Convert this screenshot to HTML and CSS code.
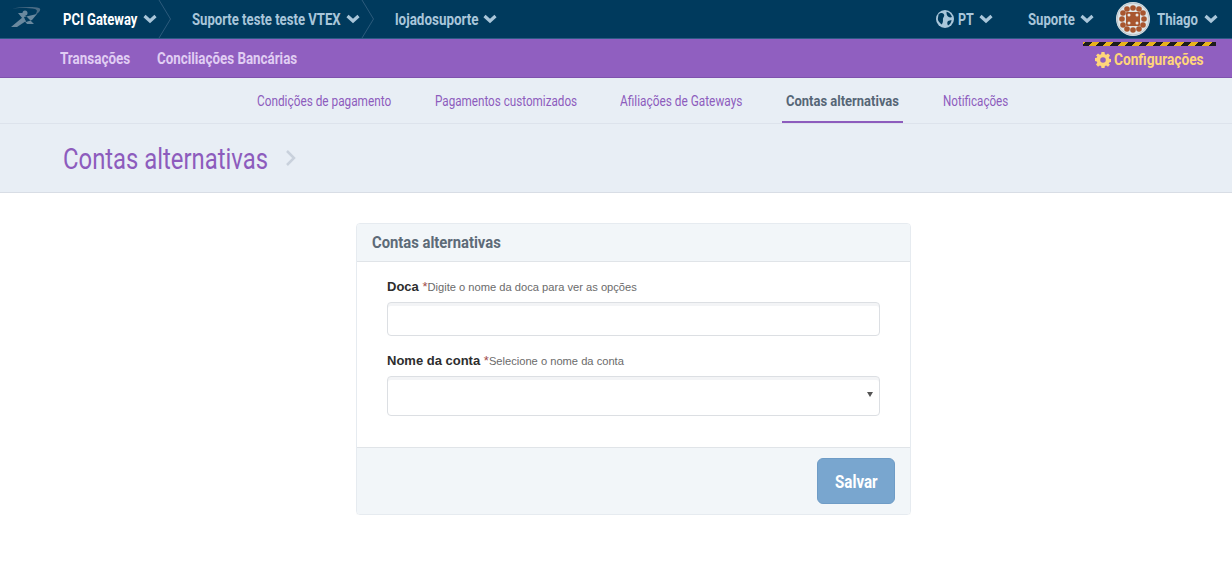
FILE: index.html
```html
<!DOCTYPE html>
<html lang="en">
<head>
    <meta charset="UTF-8">
    <title>Contas alternativas</title>
    <link rel="stylesheet" href="styles.css">
</head>
<body>

<div class="topbar">
    <svg class="logo" width="44" height="26" viewBox="0 0 44 26">
        <path d="M0 3 C10 1 24 0 30 2 C33 3 30 7 26 9 C28 6 29 4 26 3 C18 1.500 8 2 0 3Z" fill="#4a6c85"/>
        <circle cx="16" cy="7" r="2.500" fill="#6a899f"/>
        <path d="M2 21 L14 11 L17 15 L8 21Z M28 8 L15 11 L17 16 L23 14Z M9 7 L14 7 L25 18 L18 18Z" fill="#6a899f"/>
    </svg>
    <div class="crumb crumb-active"><span class="cond w-pci">PCI Gateway</span> <svg class="chev" viewBox="0 0 14 10"><path d="M1.500 2 L7 7 L12.500 2" /></svg></div>
    <svg class="sep" width="14" height="38" viewBox="0 0 14 38"><path d="M1 0 L12.500 19 L1 38" /></svg>
    <div class="crumb"><span class="cond w-store">Suporte teste teste VTEX</span> <svg class="chev" viewBox="0 0 14 10"><path d="M1.500 2 L7 7 L12.500 2" /></svg></div>
    <svg class="sep" width="14" height="38" viewBox="0 0 14 38"><path d="M1 0 L12.500 19 L1 38" /></svg>
    <div class="crumb"><span class="cond w-loja">lojadosuporte</span> <svg class="chev" viewBox="0 0 14 10"><path d="M1.500 2 L7 7 L12.500 2" /></svg></div>

    <div class="topbar-right">
        <div class="crumb lang">
            <svg class="globe" width="18" height="18" viewBox="0 0 18 18">
                <circle cx="9" cy="9" r="9" fill="#a9c6da"/>
                <path d="M2.500 4.500 C4 2.500 7 2.500 8 4.500 C9 6.500 6.500 7.500 7 10 C7 12 6.500 14 5.500 14.500 C4 12.500 2 11.500 1.800 9Z M10.500 1.800 C12.500 2 15 4 16 7 C14 8 12.500 7 11.500 6 C10.500 5 10.500 3 10.500 1.800Z M12 11 L15.500 10 C15.500 12 14 14.500 12 15.500 C11 14 11 12 12 11Z" fill="#003a5d"/>
            </svg>
            <span class="cond w-pt">PT</span> <svg class="chev" viewBox="0 0 14 10"><path d="M1.500 2 L7 7 L12.500 2" /></svg>
        </div>
        <div class="crumb"><span class="cond w-sup">Suporte</span> <svg class="chev" viewBox="0 0 14 10"><path d="M1.500 2 L7 7 L12.500 2" /></svg></div>
        <div class="crumb user">
            <svg class="avatar" width="34" height="34" viewBox="0 0 34 34">
                <circle cx="17" cy="17" r="17" fill="#dfe5e6"/>
                <circle cx="17" cy="17" r="16" fill="none" stroke="#b9c6cd"/>
                <g fill="#a8562f">
                    <circle cx="11" cy="7" r="2.800"/><circle cx="17" cy="6" r="2.800"/><circle cx="23" cy="7" r="2.800"/>
                    <circle cx="7" cy="11" r="2.800"/><circle cx="27" cy="11" r="2.800"/>
                    <circle cx="6" cy="17" r="2.800"/><circle cx="28" cy="17" r="2.800"/>
                    <circle cx="7" cy="23" r="2.800"/><circle cx="27" cy="23" r="2.800"/>
                    <circle cx="11" cy="27" r="2.800"/><circle cx="17" cy="28" r="2.800"/><circle cx="23" cy="27" r="2.800"/>
                    <rect x="10" y="10" width="14" height="14" rx="1"/>
                </g>
                <g fill="#e8e4e0">
                    <circle cx="13" cy="13" r="1.500"/><circle cx="21" cy="13" r="1.500"/>
                    <circle cx="13" cy="21" r="1.500"/><circle cx="21" cy="21" r="1.500"/>
                </g>
            </svg>
            <span class="cond w-user">Thiago</span> <svg class="chev" viewBox="0 0 14 10"><path d="M1.500 2 L7 7 L12.500 2" /></svg>
        </div>
    </div>
</div>

<div class="mainnav">
    <a class="mainnav-link cond w-trans">Transações</a>
    <a class="mainnav-link cond w-conc">Conciliações Bancárias</a>
    <div class="settings">
        <div class="hazard"></div>
        <div class="settings-label">
            <svg width="16" height="16" viewBox="0 0 16 16">
                <path fill="#ffd67a" fill-rule="evenodd" d="M6.500 0h3l.4 2.200 1.300.6L13 1.500 15 3.600l-1.300 1.800.5 1.300 1.800.4v3l-1.800.4-.5 1.300L15 12.600 13 14.700l-1.800-1.300-1.300.5-.4 2.100h-3l-.4-2.100-1.300-.5L3 14.700 1 12.600l1.300-1.800-.5-1.300L0 9.100v-3l1.800-.4.5-1.300L1 3.600 3 1.500l1.800 1.300 1.300-.6zM8 5.200a2.800 2.800 0 1 0 0 5.600 2.800 2.800 0 0 0 0-5.600z"/>
            </svg>
            <span class="cond w-conf">Configurações</span>
        </div>
    </div>
</div>

<div class="subnav">
    <a class="subnav-link"><span class="cond w-cond">Condições de pagamento</span></a>
    <a class="subnav-link"><span class="cond w-pag">Pagamentos customizados</span></a>
    <a class="subnav-link"><span class="cond w-afil">Afiliações de Gateways</span></a>
    <a class="subnav-link subnav-active"><span class="cond w-contas">Contas alternativas</span></a>
    <a class="subnav-link"><span class="cond w-notif">Notificações</span></a>
</div>

<div class="pagehead">
    <h1 class="cond w-title">Contas alternativas</h1>
    <svg width="14" height="18" viewBox="0 0 14 18"><path d="M3 2 L10 9 L3 16" /></svg>
</div>

<div class="panel">
    <div class="panel-head"><span class="cond w-head">Contas alternativas</span></div>
    <div class="panel-body">
        <label class="field-label" for="doca"><b>Doca</b> <i>*</i><span>Digite o nome da doca para ver as opções</span></label>
        <input class="field field-input" id="doca" type="text">
        <label class="field-label" for="conta"><b>Nome da conta</b> <i>*</i><span>Selecione o nome da conta</span></label>
        <div class="field field-select" id="conta"></div>
    </div>
    <div class="panel-foot">
        <button class="save"><span class="cond w-save">Salvar</span></button>
    </div>
</div>

</body>
</html>
```

FILE: styles.css
```css
body {
    margin: 0;
    font-family: "Roboto", "Liberation Sans", sans-serif;
    background-color: #fff;
}

/* the original face is condensed, none is installed: squeeze Roboto to the same widths */
.cond {
    display: inline-block;
    white-space: nowrap;
    transform-origin: left center;
    transform: scaleX(var(--squeeze));
}
.w-pci { width: 75px; --squeeze: 0.815; }
.w-store { width: 149px; --squeeze: 0.82; }
.w-loja { width: 83px; --squeeze: 0.84; }
.w-pt { width: 15px; --squeeze: 0.78; }
.w-sup { width: 47px; --squeeze: 0.82; }
.w-user { width: 40px; --squeeze: 0.82; }
.w-trans { width: 70px; --squeeze: 0.814; }
.w-conc { width: 140px; --squeeze: 0.81; }
.w-conf { width: 90px; --squeeze: 0.83; }
.w-cond { width: 134px; --squeeze: 0.787; }
.w-pag { width: 141px; --squeeze: 0.778; }
.w-afil { width: 122px; --squeeze: 0.79; }
.w-contas { width: 113px; --squeeze: 0.865; }
.w-notif { width: 65px; --squeeze: 0.775; }
.w-title { width: 205px; --squeeze: 0.795; }
.w-head { width: 128px; --squeeze: 0.87; }
.w-save { width: 42px; --squeeze: 0.84; }

.topbar {
    display: flex;
    align-items: center;
    height: 38px;
    background-color: #003a5d;
    border-bottom: 1px solid #2c5b86;
    padding-left: 9px;
    color: #a9c6da;
    font-size: 16px;
    font-weight: 700;
}
.logo {
    margin-right: 10px;
}
.crumb {
    display: flex;
    align-items: center;
    gap: 5px;
    white-space: nowrap;
}
.crumb-active {
    color: #fff;
}
.chev {
    flex: none;
    width: 14px;
    height: 10px;
    fill: none;
    stroke: #a9c6da;
    stroke-width: 3.200;
}
.sep {
    flex: none;
    margin: 0 20px 0 1px;
    fill: none;
    stroke: #2c5b7c;
}
.topbar-right {
    display: flex;
    align-items: center;
    margin-left: auto;
    padding-right: 14px;
}
.lang {
    margin-right: 35px;
    gap: 4px;
}
.lang .chev {
    margin-left: 2px;
}
.user {
    margin-left: 22px;
    gap: 7px;
}
.mainnav {
    display: flex;
    align-items: center;
    height: 38px;
    padding-left: 60px;
    background-color: #905fc0;
    border-bottom: 1px solid #7f52ad;
    gap: 27px;
}
.mainnav-link {
    color: #e0cdf3;
    font-size: 16.500px;
    font-weight: 700;
}
.settings {
    margin-left: auto;
    margin-right: 16px;
    width: 133px;
    align-self: flex-start;
    padding-top: 3px;
}
.hazard {
    height: 4px;
    background: repeating-linear-gradient(-45deg, #1d1d1d 0 5px, #e8b21c 5px 10px);
}
.settings-label {
    display: flex;
    align-items: center;
    gap: 3px;
    height: 25px;
    margin-top: 1px;
    margin-left: 12px;
    color: #ffd67a;
    font-size: 16.500px;
    font-weight: 700;
}
.settings-label svg {
    flex: none;
}
.subnav {
    display: flex;
    justify-content: center;
    height: 45px;
    gap: 36px;
    padding-left: 32px;
    background-color: #e8eef5;
    border-bottom: 1px solid #dde3ec;
}
.subnav-link {
    display: flex;
    align-items: center;
    box-sizing: border-box;
    padding: 0 4px;
    color: #8d5cbd;
    font-size: 15px;
}
.subnav-active {
    color: #566676;
    font-weight: 700;
    border-bottom: 2px solid #8d5cbd;
    padding-top: 2px;
}
.pagehead {
    display: flex;
    align-items: center;
    gap: 16px;
    height: 68px;
    padding-left: 63px;
    background-color: #e8eef5;
    border-bottom: 1px solid #d8dde5;
}
.pagehead h1 {
    margin: 0;
    color: #8d5cbd;
    font-size: 30px;
    font-weight: 400;
}
.pagehead svg {
    fill: none;
    stroke: #c9d1dc;
    stroke-width: 2.500;
}
.panel {
    width: 553px;
    margin: 30px 0 0 356px;
    border: 1px solid #e6ebf0;
    border-radius: 4px;
    overflow: hidden;
    box-shadow: 0 1px 1px rgba(0,0,0,0.03);
}
.panel-head {
    height: 37px;
    line-height: 37px;
    padding-left: 15px;
    background-color: #f2f6f9;
    border-bottom: 1px solid #e0e4e8;
    color: #5d6b78;
    font-size: 17px;
    font-weight: 700;
}
.panel-body {
    padding: 15px 30px 31px;
}
.field-label {
    display: block;
    height: 25px;
    font-family: "Liberation Sans", Arial, sans-serif;
    line-height: 20px;
    font-size: 13px;
    color: #2d2d2d;
}
.field-label i {
    color: #a04a4a;
    font-style: normal;
}
.field-label span {
    color: #6b6b6b;
    font-size: 11.150px;
}
.field {
    display: block;
    box-sizing: border-box;
    width: 493px;
    border: 1px solid #dcdfe3;
    border-radius: 4px;
    box-shadow: inset 0 3px 0 #f3f4f6;
    background-color: #fff;
}
.field-input {
    height: 34px;
    margin-bottom: 15px;
}
.field-select {
    position: relative;
    height: 40px;
}
.field-select::after {
    content: "";
    position: absolute;
    right: 6px;
    top: 15px;
    border-left: 3px solid transparent;
    border-right: 3px solid transparent;
    border-top: 5px solid #555;
}
.panel-foot {
    display: flex;
    justify-content: flex-end;
    padding: 10px 15px 10px;
    background-color: #f2f6f9;
    border-top: 1px solid #e0e4e8;
}
.save {
    width: 78px;
    height: 46px;
    padding: 0;
    border: 1px solid #6f9cc6;
    border-radius: 6px;
    background-color: #79a6cf;
    color: #fff;
    font-family: inherit;
    font-size: 18px;
    font-weight: 700;
}
```
